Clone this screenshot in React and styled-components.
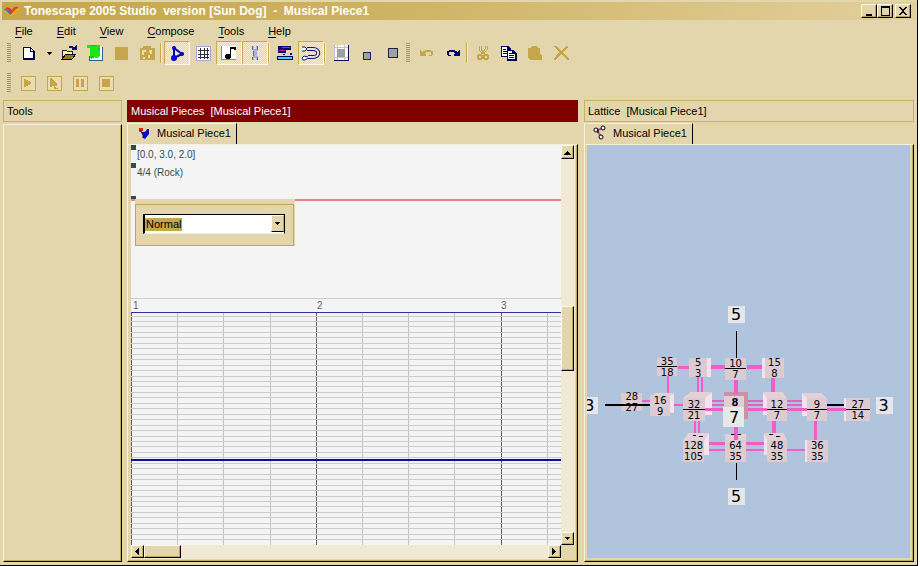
import styled, {createGlobalStyle} from "styled-components";

const GlobalStyle = createGlobalStyle`
  body {
    margin: 0;
    background: #ffffff;
    font-family: "Liberation Sans", Arial, sans-serif;
    font-size: 11px;
    line-height: 14px;
    color: #000000;
  }
  button, select {
    font: inherit;
    color: inherit;
    border-radius: 0;
  }
`

const Window = styled.div`
  box-sizing: border-box;
  display: flex;
  flex-direction: column;
  height: 100vh;
  margin-right: 2px;
  padding: 2px 3px 3px 3px;
  border-right: 1px solid #000000;
  border-bottom: 1px solid #000000;
  background: #e4d6ac;
`

const TitleBar = styled.header`
  display: flex;
  align-items: center;
  flex: none;
  height: 18px;
  margin: 0 -2px 0 -1px;
  padding: 0 5px 0 2px;
  background: linear-gradient(to right, #c6a64a, #cfb464 45%, #e2d09c);
`

const Title = styled.h1`
  flex: 1;
  margin: 0 0 0 4px;
  font-size: 12px;
  font-weight: bold;
  color: #fffdf4;
  white-space: pre;
`

const CaptionButton = styled.button`
  box-sizing: border-box;
  width: 16px;
  height: 14px;
  padding: 0;
  margin-left: ${props => props.$apart ? `2px` : `0`};
  border: 1px solid;
  border-color: #fffbe8 #000000 #000000 #fffbe8;
  box-shadow: inset -1px -1px #b8a060;
  background: #e4d6ac;
  svg {
    display: block;
    margin: 0 auto;
  }
`

const MenuBar = styled.nav`
  display: flex;
  flex: none;
  align-items: center;
  height: 21px;
`

const MenuItem = styled.button`
  padding: 0 12px;
  border: none;
  background: none;
  u {
    text-underline-offset: 2px;
  }
`

const Toolbar = styled.div`
  display: flex;
  flex: none;
  align-items: center;
  height: 24px;
  margin-bottom: ${props => props.$last ? `5px` : `6px`};
  padding-left: 4px;
`

const Grip = styled.span`
  width: 4px;
  height: 20px;
  margin: 0 ${props => props.$gap || `4px`} 0 0;
  background: repeating-linear-gradient(to bottom, #a09478 0 1px, #e4d6ac 1px 2px);
`

const Separator = styled.span`
  width: 4px;
  height: 20px;
  background: linear-gradient(to right, #c8a850 1px, #f4ecd0 1px 2px, transparent 2px);
`

const ToolButton = styled.button`
  box-sizing: border-box;
  display: flex;
  align-items: ${props => props.$low ? `flex-end` : `center`};
  justify-content: center;
  width: ${props => props.$narrow ? `14px` : `26px`};
  height: 24px;
  padding: ${props => props.$low ? `0 0 4px` : `0`};
  border: 1px solid;
  border-color: ${props => props.$on ? `#c8a850 #fffbe8 #fffbe8 #c8a850` : `transparent`};
  background: ${props => props.$on ? `repeating-conic-gradient(#f4ebd0 0 25%, #e6d8ac 0 50%) 0 0 / 2px 2px` : `none`};
`

const Workspace = styled.main`
  display: grid;
  grid-template-columns: 119px 5px 451fr 6px 330fr;
  flex: 1;
  min-height: 0;
`

const Panel = styled.section`
  display: flex;
  flex-direction: column;
  grid-column: ${props => props.$column};
  min-width: 0;
  min-height: 0;
`

const PanelTitle = styled.h2`
  box-sizing: border-box;
  flex: none;
  height: 22px;
  margin: 0;
  padding: 3px;
  border: 1px solid ${props => props.$active ? `#800000` : `#c8b068`};
  background: ${props => props.$active ? `#800000` : `#e4d6ac`};
  color: ${props => props.$active ? `#ffffff` : `#000000`};
  font-size: 11px;
  font-weight: normal;
  white-space: pre;
`

const ToolsBody = styled.div`
  flex: 1;
  margin-top: 2px;
  border: 1px solid;
  border-color: #f8f0d8 #000000 #000000 #f8f0d8;
  box-shadow: inset -1px -1px #c0a860;
`

const TabStrip = styled.div`
  display: flex;
  flex: none;
  height: 22px;
`

const Tab = styled.button`
  display: flex;
  align-items: center;
  gap: 6px;
  height: 21px;
  margin-top: 1px;
  padding: 0 5px 2px ${props => props.$indent};
  border: 1px solid;
  border-color: #f8f0d8 #000000 transparent #f8f0d8;
  border-bottom: none;
  background: #e4d6ac;
`

const Pane = styled.div`
  display: grid;
  grid-template-columns: ${props => props.$scroll ? `minmax(0, 1fr) 14px` : `minmax(0, 1fr)`};
  grid-template-rows: ${props => props.$scroll ? `minmax(0, 1fr) 14px` : `minmax(0, 1fr)`};
  flex: 1;
  min-height: 0;
  padding: 0 ${props => props.$scroll ? `2px 2px 3px` : `3px 3px 2px`};
  border: 1px solid;
  border-color: #f8f0d8 #000000 #000000 #f8f0d8;
  box-shadow: inset -1px -1px #c0a860;
`

const Timeline = styled.div`
  position: relative;
  display: flex;
  flex-direction: column;
  min-width: 0;
  background: #f4f4f4;
  overflow: hidden;
`

const TrackRow = styled.div`
  display: flex;
  flex: none;
  gap: 1px;
  height: ${props => props.$height};
  font-size: 10px;
  color: #2f4f4f;
  &:before {
    content: "";
    width: 5px;
    height: 5px;
    background: #2f4f4f;
  }
  span {
    padding-top: 3px;
  }
`

const TempoArea = styled.div`
  flex: none;
  height: 97px;
  border-top: 2px solid #e88484;
`

const TempoEditor = styled.form`
  position: absolute;
  top: 54px;
  left: 4px;
  box-sizing: border-box;
  width: 160px;
  padding: 5px 1px 0 0;
  background: #e4d6ac;
`

const TempoFrame = styled.div`
  box-sizing: border-box;
  height: 42px;
  padding: 9px 8px 9px 7px;
  border: 1px solid #c0a458;
`

const SelectBox = styled.label`
  position: relative;
  display: block;
`

const Select = styled.select`
  appearance: none;
  box-sizing: border-box;
  display: block;
  width: 100%;
  height: 20px;
  padding: 0 16px 0 1px;
  border: 1px solid;
  border-color: #000000 #000000 #f4ecd0 #000000;
  border-left-width: 2px;
  outline: none;
  background: linear-gradient(#c6a64a, #c6a64a) 0 3px / 37px 13px no-repeat #ffffff;
`

const SelectArrow = styled.span`
  position: absolute;
  top: 1px;
  right: 1px;
  box-sizing: border-box;
  display: flex;
  align-items: center;
  justify-content: center;
  width: 13px;
  height: 17px;
  border: 1px solid;
  border-color: #fffbe8 #c0a860 #000000 #fffbe8;
  background: #e4d6ac;
  pointer-events: none;
`

const Ruler = styled.div`
  display: flex;
  flex: none;
  height: 13px;
  border-top: 1px solid #cccccc;
  border-bottom: 1px solid #30309c;
  font-size: 10px;
  line-height: 13px;
  color: #666666;
  span {
    box-sizing: border-box;
    flex: 0 0 184px;
    padding-left: 2px;
  }
`

const Roll = styled.svg`
  display: block;
  flex: 1;
  width: 100%;
  min-height: 0;
`

const VerticalBar = styled.div`
  display: grid;
  grid-template-rows: 14px 147fr 65fr 161fr 13px;
  padding-right: 1px;
  background: #f1e9d4;
`

const HorizontalBar = styled.div`
  display: grid;
  grid-template-columns: 13px 37fr 367fr 13px;
  padding-bottom: 1px;
  background: #f1e9d4;
`

const BarPart = styled.button`
  box-sizing: border-box;
  display: flex;
  align-items: center;
  justify-content: center;
  grid-area: ${props => props.$area};
  min-width: 0;
  padding: 0;
  border: 1px solid;
  border-color: #fffbe8 #000000 #000000 #fffbe8;
  box-shadow: inset -1px -1px #c0a860;
  background: #e4d6ac;
`

const LatticeView = styled.svg`
  display: block;
  width: 100%;
  height: 100%;
  background: #b0c4de;
  font-family: "DejaVu Sans", sans-serif;
  font-size: 10px;
  text-anchor: middle;
`

const GOLD = "#c6a64a"
const NAVY = "#000080"

function Icon({size = 16, children}) {
	return <svg width={size} height={size} viewBox={`0 0 ${size} ${size}`} shapeRendering="crispEdges" aria-hidden="true">
		{children}
	</svg>
}

const arrows = {
	up: "M0 4h7v-1h-1v-1h-1v-1h-1v-1h-1v1h-1v1h-1v1h-1z",
	down: "M1 0h5v1h-1v1h-1v1h-1v-1h-1v-1h-1z",
	left: "M4 0v7h-1v-1h-1v-1h-1v-1h-1v-1h1v-1h1v-1h1v-1z",
	right: "M0 0v7h1v-1h1v-1h1v-1h1v-1h-1v-1h-1v-1h-1v-1z",
}

function Arrow({to}) {
	return <svg width="7" height="7" viewBox={to === "up" || to === "down" ? "0 -2 7 7" : "-1 0 7 7"} shapeRendering="crispEdges" aria-hidden="true">
		<path d={arrows[to]}/>
	</svg>
}

const NewIcon = () => <Icon>
	<path d="M3 2h7l3 3v9H3z" fill="#fff"/>
	<path d="M2 2h8v1H3v11H2zM9 2h1v4h4v1H9zM10 3h1v1h-1zM11 4h1v1h-1zM12 5h1v1h-1zM12 6h2v9H2v-2h10z" fill="#000050"/>
</Icon>

const OpenIcon = () => <Icon>
	<path d="M1 5h4l1 1h5v3H5l-3 5H1z" fill="#f8f4a0" stroke="#202040"/>
	<path d="M1 14l4-5h10l-4 5z" fill="#908020" stroke="#000020"/>
	<path d="M8 3c2-2 4-1 5 1" fill="none" stroke="#101060" strokeWidth="2"/>
	<path d="M10 5h6V0z" fill="#101060"/>
</Icon>

const StyleIcon = () => <Icon>
	<path d="M3 1h12v14H3z" fill="#f4fff4"/>
	<path d="M15 2v13H2v-4" fill="none" stroke="#286090"/>
	<path d="M0 0h13v10l-2 3H9l-2-1-3 2-1-2V3H0z" fill="#18e818"/>
	<path d="M3 0h6v1H3zM11 3h2v2h-2zM4 11h3v2H4z" fill="#40a840"/>
</Icon>

const SaveIcon = () => <Icon><path d="M2 2h13v13H2z" fill={GOLD}/></Icon>

const SaveAllIcon = () => <Icon>
	<path d="M1 3h3V1h8v2h4v12H1z" fill={GOLD}/>
	<path d="M3 5h4v2H5v3H3zM10 5h3v4h-2V7h-1zM4 12h2v2H4zM9 10h2v3H9z" fill="#ecdcae"/>
</Icon>

const LatticeIcon = () => <svg width="16" height="16" viewBox="0 0 16 16" aria-hidden="true">
	<path d="M5 3v10M5 3l8 6-8 4" fill="none" stroke="#0000a8" strokeWidth="2"/>
	<circle cx="5" cy="3" r="2" fill="#0000c0"/>
	<circle cx="5" cy="13" r="3" fill="#0000d0"/>
	<circle cx="13" cy="9" r="2" fill="#0000a0"/>
</svg>

const GridIcon = () => <Icon>
	<path d="M1 1h14v14H1z" fill="#fcfcff" stroke="#a0a8d8"/>
	<path d="M5 3h1v11H5zM9 3h1v11H9zM12 3h1v11h-1zM3 5h11v1H3zM3 9h11v1H3zM3 12h11v1H3z" fill="#303040"/>
</Icon>

const NoteIcon = () => <Icon>
	<path d="M0 1h15v14H0z" fill="#fff"/>
	<path d="M0 1h1v14H0zM0 14h15v1H0z" fill="#8080c8"/>
	<path d="M9 2h6v3h-2V4h-3v8H9z"/>
	<path d="M5 9h5v4H9v1H5l-1-1v-3h1z"/>
</Icon>

const WrenchIcon = () => <Icon>
	<path d="M5 1h2v3h2V1h2v4l-1 1v5l1 1v3H9v-2H7v2H5v-3l1-1V6L5 5z" fill="#a8b4dc"/>
	<path d="M5 1h1v4H5zM10 1h1v4h-1zM6 6h1v5H6zM5 12h1v3H5zM10 12h1v3h-1z" fill="#6068a0"/>
</Icon>

const BarsIcon = () => <Icon>
	<path d="M1 1h13v4H9v3H1z" fill="#100070"/>
	<path d="M5 2h8v1H5zM2 5h6v1H2z" fill="#c02890"/>
	<path d="M6 9h2v1H6zM13 8h2v2h-2z" fill="#101040"/>
	<path d="M0 11h16v4H0z" fill="#000060"/>
	<path d="M1 12h14v2H1z" fill="#30d8ff"/>
</Icon>

const LoopIcon = () => <svg width="20" height="16" viewBox="0 0 20 16" aria-hidden="true">
	<path d="M6 4h6c7 0 7 8 0 8H7" fill="none" stroke="#101070" strokeWidth="4"/>
	<path d="M5 4h7c7 0 7 8 0 8H6" fill="none" stroke="#e8e4dc" strokeWidth="2"/>
	<path d="M1 2h3l2 2-2 2H1M7 13l-3 2H2l-1-2 2-2 4 1" fill="#fff" stroke="#101070"/>
</svg>

const PageIcon = () => <Icon>
	<path d="M1 0h14v16H1z" fill="#f8f8ff"/>
	<path d="M1 0h1v16H1zM4 0h1v16H4zM11 0h1v16h-1zM1 2h14v1H1zM1 12h14v1H1z" fill="#b8c0e0"/>
	<path d="M15 0h1v16H1v-1h14z" fill="#101050"/>
	<path d="M4 4h8v8H4z" fill="#a0a0a0"/>
</Icon>

const BoxIcon = ({size}) => <Icon size={size}>
	<path d={`M0 0h${size}v${size}H0z`} fill="#202060"/>
	<path d={`M1 1h${size - 2}v${size - 2}H1z`} fill="#a0a0a0"/>
</Icon>

const TurnIcon = ({color, flip}) => <svg width="14" height="8" viewBox="0 0 14 8" shapeRendering="crispEdges" aria-hidden="true">
	<g transform={flip ? "translate(14 0) scale(-1 1)" : undefined} fill={color}>
		<path d="M0 1h1v1h1v1h1V2h2V1h6v1h2v4h-1v1h-3V6h2V3H6v1H5v1h1v2H0z"/>
	</g>
</svg>

const CutIcon = () => <Icon>
	<path d="M4 1v4l4 4 4-4V1M6 1v3l4 6M10 1v3l-4 6" fill="none" stroke={GOLD}/>
	<path d="M3 9h4v1h1v4H7v1H3v-1H2v-4h1zM9 9h4v1h1v4h-1v1H9v-1H8v-4h1zM4 11v2h2v-2zM10 11v2h2v-2z" fill={GOLD} fillRule="evenodd"/>
</Icon>

const CopyIcon = () => <Icon>
	<path d="M0 1h7l3 3v8H0z" fill="#000050"/>
	<path d="M1 2h5v3h3v6H1z" fill="#fff"/>
	<path d="M2 4h3v1H2zM2 6h4v1H2zM2 8h4v1H2z" fill="#000050"/>
	<path d="M6 5h6l4 4v7H6z" fill="#000050"/>
	<path d="M7 6h4v3h3v5H7z" fill="#fff"/>
	<path d="M8 8h3v1H8zM8 10h5v1H8zM8 12h5v1H8z" fill="#000050"/>
</Icon>

const PasteIcon = () => <Icon><path d="M1 3h3l1-2h5l1 2h2v5l2 3v4H3l-2-2z" fill={GOLD}/></Icon>

const DeleteIcon = () => <Icon><path d="M1 1h2l5 5 6-5h1v1l-5 5 6 7v1h-2L8 9l-5 6H1v-1l5-7-5-5z" fill={GOLD}/></Icon>

const transports = [
	["Play", "M4 4h2v1h2v1h2v1h1v2h-1v1H8v1H6v1H4z"],
	["Play from cursor", "M4 3h1l6 6v2H9v1h1v1h2v1H8v-3H6v1H4z"],
	["Pause", "M4 4h3v8H4zM9 4h3v8H9z"],
	["Stop", "M4 4h8v8H4z"],
]

const AppIcon = () => <svg width="16" height="14" viewBox="0 0 16 14" aria-hidden="true">
	<path d="M0 6c3-3 5 1 8 4l-2 1C4 9 3 6 0 6z" fill="#3070d0"/>
	<path d="M1 5c3-4 6 0 8 3l-2 2C5 7 4 4 1 5z" fill="#e83018"/>
	<path d="M6 10c3 2 4-6 9-6v3c-4 0-5 6-8 5z" fill="#f4a818"/>
	<path d="M8 6c2-4 5-4 7-2-4 0-4 3-6 4z" fill="#e04028"/>
	<path d="M1 8c2-1 3 2 5 3" fill="none" stroke="#e8b020"/>
</svg>

const PieceIcon = () => <svg width="14" height="12" viewBox="0 0 14 12" aria-hidden="true">
	<path d="M2 1h4v3H2z" fill="#e02010"/>
	<path d="M4 5h3l2-1 1-2h2v5l-4 5-2-1V8z" fill="#0808d8"/>
	<path d="M2 4h2l2 4v3M11 2v4" fill="none" stroke="#201040"/>
</svg>

const NodesIcon = () => <svg width="14" height="16" viewBox="0 0 14 16" aria-hidden="true">
	<path d="M4 5l4 7M5 5l5-2" stroke="#b060a0" strokeWidth="2"/>
	<circle cx="3" cy="5" r="2" fill="#fff" stroke="#000"/>
	<circle cx="10" cy="3" r="2" fill="#fff" stroke="#000"/>
	<circle cx="8" cy="12" r="2" fill="#fff" stroke="#000"/>
	<path d="M5 4v4" stroke="#000"/>
</svg>

const menus = ["File", "Edit", "View", "Compose", "Tools", "Help"]

const rowLines = Array.from({length: 42}, (_, i) => Math.floor(3 + i * 60 / 11))
const beats = Array.from({length: 40}, (_, i) => Math.round(i * 46.2))

// [x1, y1, x2, y2, width]
const links = [
	[91, 223, 102, 223, 3], [122, 223, 139, 223, 4], [160, 223, 177, 223, 4],
	[81, 232, 81, 252, 2], [111, 232, 111, 256, 2], [115, 232, 115, 252, 2],
	[149, 235, 149, 254, 4], [186, 232, 186, 252, 4],
	[53, 257, 64, 257, 2], [84, 261, 98, 261, 2],
	[108, 275, 108, 297, 2], [112, 275, 112, 297, 2], [187, 275, 187, 297, 4], [229, 275, 229, 297, 3],
	[121, 299, 180, 299, 3], [118, 306, 222, 306, 2],
]

const frontLinks = [[118, 137], [157, 180], [200, 220], [240, 259]]

// x and y of the front face, its size, and how far the faces behind reach out
const cubes = [
	{x: 70, y: 214, w: 20, h: 18, top: "35", bottom: "18", bar: true},
	{x: 102, y: 214, w: 18, h: 19, dx: 4, dy: 0, top: "5", bottom: "3"},
	{x: 138, y: 214, w: 21, h: 22, top: "10", bottom: "7", bar: true},
	{x: 178, y: 214, w: 19, h: 20, dx: -3, dy: 0, top: "15", bottom: "8"},
	{x: 34, y: 249, w: 21, h: 18, top: "28", bottom: "27"},
	{x: 63, y: 252, w: 20, h: 20, dx: 4, dy: -3, top: "16", bottom: "9"},
	{x: 96, y: 254, w: 22, h: 23, dx: 7, dy: -6, top: "32", bottom: "21", bar: true},
	{x: 180, y: 254, w: 20, h: 23, dx: -4, dy: -6, top: "12", bottom: "7", bar: true},
	{x: 220, y: 254, w: 20, h: 23, dx: -5, dy: -5, top: "9", bottom: "7", bar: true},
	{x: 259, y: 254, w: 24, h: 23, dx: -2, dy: 0, top: "27", bottom: "14", bar: true},
	{x: 96, y: 296, w: 21, h: 22, dx: 5, dy: -7, top: "128", bottom: "105"},
	{x: 138, y: 296, w: 21, h: 22, dx: 0, dy: -6, top: "64", bottom: "35"},
	{x: 180, y: 296, w: 20, h: 22, dx: -3, dy: -7, top: "48", bottom: "35"},
	{x: 220, y: 296, w: 21, h: 22, dx: -2, dy: 0, top: "36", bottom: "35"},
]

const axes = [
	{x: 141, y: 161, n: 5}, {x: 141, y: 344, n: 5}, {x: -6, y: 253, n: 3}, {x: 289, y: 253, n: 3},
]

function Cube({x, y, w, h, dx = 0, dy = 0, top, bottom, bar}) {
	const cx = x + w / 2
	const cy = y + h / 2
	return <g>
		<rect x={x + dx} y={y + dy} width={w} height={h} fill="#f4e2ec"/>
		<path d={`M${x} ${y}l${dx} ${dy}h${w}l${-dx} ${-dy}z`} fill="#e4d0d6"/>
		<rect x={x} y={y} width={w} height={h} fill="#dccbd1"/>
		<text x={cx} y={cy - 2}>{top}</text>
		<text x={cx} y={cy + 9}>{bottom}</text>
		{bar && <path d={`M${x} ${cy - 1}h${w}v1h${-w}z`}/>}
	</g>
}

function Lattice() {
	return <LatticeView viewBox="0 0 323 414" role="img" aria-label="Lattice" shapeRendering="crispEdges">
		<path d="M149 186h1v28h-1zM149 319h1v17h-1zM240 260h20v2h-20z"/>
		{links.map(([x1, y1, x2, y2, width]) => <line key={`${x1}-${y1}-${x2}`} x1={x1} y1={y1} x2={x2} y2={y2}
			stroke="#f45cc8" strokeWidth={width}/>)}
		<path d="M120 256h102v2H120zM120 260h102v2H120z" fill="#d868c0"/>
		{cubes.map(cube => <Cube key={`${cube.x}-${cube.y}`} {...cube}/>)}
		{frontLinks.map(([from, to]) => <rect key={from} x={from} y="264" width={to - from} height="3" fill="#f45cc8"/>)}
		<path d="M18 260h45v2H18z"/>
		<rect x="137" y="248" width="24" height="27" fill="#c894a4"/>
		<rect x="137" y="252" width="20" height="20" fill="#e2cfd6"/>
		<text x="148" y="262" fontWeight="bold">8</text>
		<path d="M147 236h4v14h-4zM147 283h4v13h-4z" fill="#f45cc8"/>
		<path d="M144 290h4v1h-4zM151 290h3v1h-3zM106 291h3v1h-3zM112 292h4v1h-4zM182 290h4v1h-4zM189 292h4v1h-4z"/>
		<rect x="136" y="263" width="21" height="20" fill="#e6eae6"/>
		<text x="147" y="279" fontSize="16">7</text>
		{axes.map(({x, y, n}) => <g key={`${x}-${y}`}>
			<rect x={x} y={y} width="17" height="17" fill="#e4e6ec"/>
			<text x={x + 8} y={y + 14} fontSize="16">{n}</text>
		</g>)}
	</LatticeView>
}

function PianoRoll() {
	return <Roll shapeRendering="crispEdges" role="img" aria-label="Piano roll">
		{beats.map((x, i) => <rect key={x} x={x} y="0" width="1" height="100%" fill={i % 4 ? "#c4c4c8" : "#606060"}/>)}
		{rowLines.map(y => <rect key={y} x="0" y={y} width="100%" height="1" fill="#cccccc"/>)}
		<rect x="0" y="146" width="100%" height="2" fill="#0c0ca0"/>
	</Roll>
}

export default function App() {
	return (<>
		<GlobalStyle/>
		<Window>
			<TitleBar>
				<AppIcon/>
				<Title>{"Tonescape 2005 Studio  version [Sun Dog]  -  Musical Piece1"}</Title>
				<CaptionButton aria-label="Minimize">
					<Icon size={12}><path d="M3 9h6v2H3z"/></Icon>
				</CaptionButton>
				<CaptionButton aria-label="Maximize">
					<Icon size={12}><path d="M2 1h9v10H2zM3 3v7h7V3z" fillRule="evenodd"/></Icon>
				</CaptionButton>
				<CaptionButton aria-label="Close" $apart>
					<Icon size={12}><path d="M2 2h2v1h1v1h2V3h1V2h2v1H9v1H8v1H7v2h1v1h1v1h1v1H8V9H7V8H5v1H4v1H2V9h1V8h1V7h1V5H4V4H3V3H2z"/></Icon>
				</CaptionButton>
			</TitleBar>
			<MenuBar>
				{menus.map(name => <MenuItem key={name}><u>{name[0]}</u>{name.slice(1)}</MenuItem>)}
			</MenuBar>
			<Toolbar>
				<Grip $gap="5px"/>
				<ToolButton aria-label="New"><NewIcon/></ToolButton>
				<ToolButton aria-label="New from" $narrow><Arrow to="down"/></ToolButton>
				<ToolButton aria-label="Open"><OpenIcon/></ToolButton>
				<ToolButton aria-label="Styles"><StyleIcon/></ToolButton>
				<ToolButton aria-label="Save" disabled><SaveIcon/></ToolButton>
				<ToolButton aria-label="Save all" disabled><SaveAllIcon/></ToolButton>
				<Separator/>
				<ToolButton aria-label="Lattice" aria-pressed="true" $on><LatticeIcon/></ToolButton>
				<ToolButton aria-label="Grid"><GridIcon/></ToolButton>
				<ToolButton aria-label="Notes" aria-pressed="true" $on><NoteIcon/></ToolButton>
				<ToolButton aria-label="Tools" aria-pressed="true" $on><WrenchIcon/></ToolButton>
				<Separator/>
				<ToolButton aria-label="Tracks"><BarsIcon/></ToolButton>
				<ToolButton aria-label="Loop" aria-pressed="true" $on><LoopIcon/></ToolButton>
				<Separator/>
				<ToolButton aria-label="Page"><PageIcon/></ToolButton>
				<ToolButton aria-label="Zoom out" $low><BoxIcon size={8}/></ToolButton>
				<ToolButton aria-label="Zoom in"><BoxIcon size={10}/></ToolButton>
				<Grip/>
				<ToolButton aria-label="Undo" disabled><TurnIcon color={GOLD}/></ToolButton>
				<ToolButton aria-label="Redo"><TurnIcon color="#000060" flip/></ToolButton>
				<Separator/>
				<ToolButton aria-label="Cut" disabled><CutIcon/></ToolButton>
				<ToolButton aria-label="Copy"><CopyIcon/></ToolButton>
				<ToolButton aria-label="Paste" disabled><PasteIcon/></ToolButton>
				<ToolButton aria-label="Delete" disabled><DeleteIcon/></ToolButton>
			</Toolbar>
			<Toolbar $last>
				<Grip/>
				{transports.map(([name, d]) => <ToolButton key={name} aria-label={name} disabled>
					<Icon>
						<path d="M1 1h14v14H1z" fill="#eadcb0" stroke={GOLD}/>
						<path d={d} fill={GOLD}/>
					</Icon>
				</ToolButton>)}
			</Toolbar>
			<Workspace>
				<Panel $column={1}>
					<PanelTitle>Tools</PanelTitle>
					<ToolsBody/>
				</Panel>
				<Panel $column={3}>
					<PanelTitle $active>{"Musical Pieces  [Musical Piece1]"}</PanelTitle>
					<TabStrip>
						<Tab $indent="9px"><PieceIcon/>Musical Piece1</Tab>
					</TabStrip>
					<Pane $scroll>
						<Timeline>
							<TrackRow $height="18px"><span>[0.0, 3.0, 2.0]</span></TrackRow>
							<TrackRow $height="33px"><span>4/4 (Rock)</span></TrackRow>
							<TrackRow $height="3px"/>
							<TempoArea/>
							<TempoEditor>
								<TempoFrame>
									<SelectBox>
										<Select aria-label="Tempo" defaultValue="Normal">
											<option>Normal</option>
										</Select>
										<SelectArrow><Arrow to="down"/></SelectArrow>
									</SelectBox>
								</TempoFrame>
							</TempoEditor>
							<Ruler><span>1</span><span>2</span><span>3</span></Ruler>
							<PianoRoll/>
						</Timeline>
						<VerticalBar>
							<BarPart aria-label="Scroll up" $area="1 / 1"><Arrow to="up"/></BarPart>
							<BarPart aria-label="Vertical position" $area="3 / 1"/>
							<BarPart aria-label="Scroll down" $area="5 / 1"><Arrow to="down"/></BarPart>
						</VerticalBar>
						<HorizontalBar>
							<BarPart aria-label="Scroll left" $area="1 / 1"><Arrow to="left"/></BarPart>
							<BarPart aria-label="Horizontal position" $area="1 / 2"/>
							<BarPart aria-label="Scroll right" $area="1 / 4"><Arrow to="right"/></BarPart>
						</HorizontalBar>
					</Pane>
				</Panel>
				<Panel $column={5}>
					<PanelTitle>{"Lattice  [Musical Piece1]"}</PanelTitle>
					<TabStrip>
						<Tab $indent="8px"><NodesIcon/>Musical Piece1</Tab>
					</TabStrip>
					<Pane>
						<Lattice/>
					</Pane>
				</Panel>
			</Workspace>
		</Window>
	</>)
}
